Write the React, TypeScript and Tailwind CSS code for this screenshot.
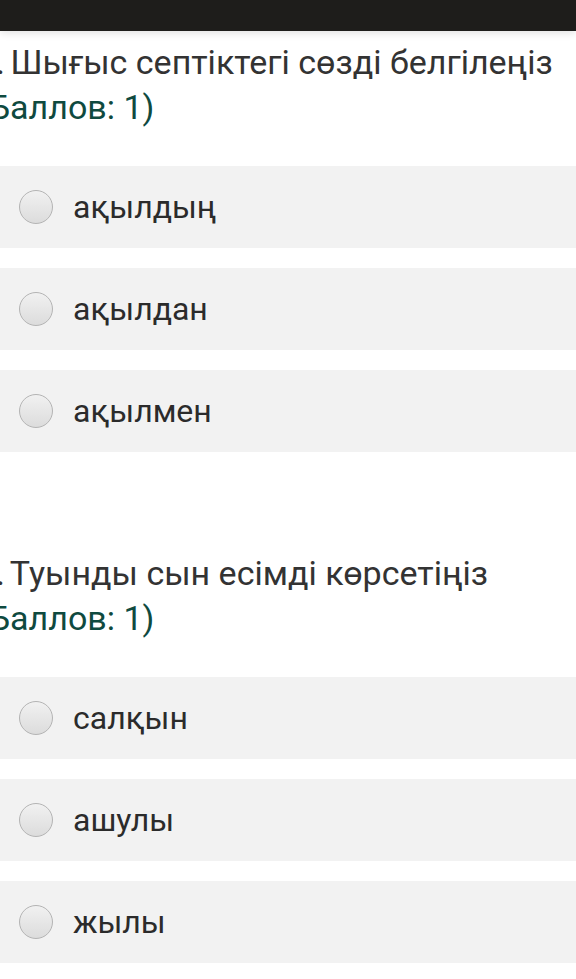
const questions = [
  {
    num: "1.",
    title: "Шығыс септіктегі сөзді белгілеңіз",
    options: ["ақылдың", "ақылдан", "ақылмен"],
  },
  {
    num: "2.",
    title: "Туынды сын есімді көрсетіңіз",
    options: ["салқын", "ашулы", "жылы"],
  },
];

const Radio = () => (
  <span className="block w-[34px] h-[34px] shrink-0 rounded-full border border-[#b4b4b4] bg-gradient-to-b from-[#f1f1f1] to-[#dcdcdc]" />
);

export default function App() {
  return (
    <div className="w-[576px] h-[979px] overflow-hidden bg-white font-['Roboto',sans-serif]">
      <div className="h-[31px] bg-[#1e1d1b] shadow-[0_2px_8px_rgba(0,0,0,0.12)]" />
      <div className="flex flex-col gap-[99px] pt-[9px]">
        {questions.map((q) => (
          <div key={q.title}>
            <div className="-ml-[23px] text-[34px] leading-[45px] text-[#333333] whitespace-nowrap">
              <p>
                <span className="mr-[-3px]">{q.num}</span> {q.title}
              </p>
              <p className="text-[#0f4a3f]">(Баллов: 1)</p>
            </div>
            <div className="mt-[36px] flex flex-col gap-[20px]">
              {q.options.map((opt) => (
                <label
                  key={opt}
                  className="flex items-center h-[82px] bg-[#f2f2f2] pl-[19px] gap-[20px]"
                >
                  <Radio />
                  <span className="text-[32px] text-[#2b2b2b]">{opt}</span>
                </label>
              ))}
            </div>
          </div>
        ))}
      </div>
    </div>
  );
}
